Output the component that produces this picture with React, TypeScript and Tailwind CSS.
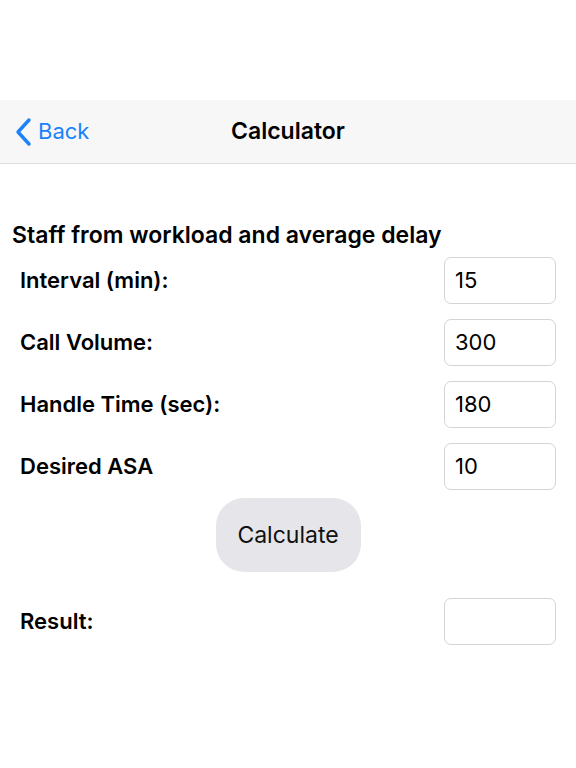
import React from "react";

const rows = [
  { label: "Interval (min):", value: "15" },
  { label: "Call Volume:", value: "300" },
  { label: "Handle Time (sec):", value: "180" },
  { label: "Desired ASA", value: "10" },
];

function Field({ value }: { value: string }) {
  return (
    <div className="w-[112px] h-[47px] rounded-[7px] border border-[#d4d4d8] bg-white px-[10px] flex items-center text-[22px] text-black">
      {value}
    </div>
  );
}

export default function App() {
  return (
    <div className="w-[576px] h-[768px] bg-white font-['Inter','Liberation_Sans',Arial,sans-serif] text-black">
      <div className="h-[100px]" />
      <div className="relative h-[64px] bg-[#f7f7f7] border-b border-[#dcdcdc] flex items-center justify-center">
        <div className="absolute left-[14px] top-0 h-full flex items-center gap-[6px] text-[#1a82fb]">
          <svg width="18" height="30" viewBox="0 0 18 30" fill="none">
            <path d="M15 3 L4 15 L15 27" stroke="currentColor" strokeWidth="3.4" strokeLinecap="round" strokeLinejoin="round" />
          </svg>
          <span className="text-[22px]">Back</span>
        </div>
        <span className="text-[23px] font-semibold">Calculator</span>
      </div>
      <div className="pt-[56px]">
        <div className="pl-[12px] text-[23px] font-semibold leading-[30px]">Staff from workload and average delay</div>
        <div className="mt-[7px] flex flex-col gap-[15px] pl-[20px] pr-[20px]">
          {rows.map((r) => (
            <div key={r.label} className="flex items-center justify-between">
              <span className="text-[22px] font-semibold">{r.label}</span>
              <Field value={r.value} />
            </div>
          ))}
        </div>
        <div className="mt-[8px] flex justify-center">
          <button className="w-[145px] h-[74px] rounded-[28px] bg-[#e5e5ea] text-[23px] text-[#111]">Calculate</button>
        </div>
        <div className="mt-[26px] flex items-center justify-between pl-[20px] pr-[20px]">
          <span className="text-[22px] font-semibold">Result:</span>
          <Field value="" />
        </div>
      </div>
    </div>
  );
}
